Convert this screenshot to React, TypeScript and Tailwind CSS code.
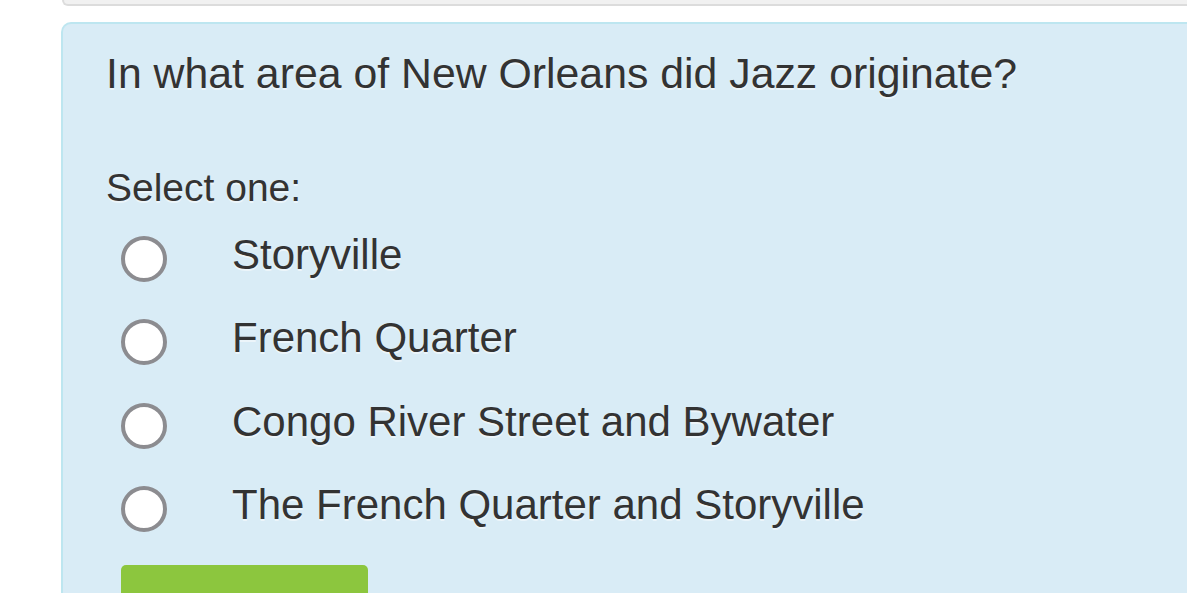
const options = [
  'Storyville',
  'French Quarter',
  'Congo River Street and Bywater',
  'The French Quarter and Storyville',
]

function Radio() {
  return (
    <span className="mt-[6px] block h-[46px] w-[46px] shrink-0 rounded-full border-[4px] border-[#8c8c90] bg-white" />
  )
}

export default function App() {
  return (
    <div
      className="h-[593px] w-[1187px] overflow-hidden bg-white text-[#333]"
      style={{ fontFamily: '"Liberation Sans", Arial, Helvetica, sans-serif' }}
    >
      {/* previous panel, only its bottom edge shows */}
      <div className="ml-[62px] h-[6px] rounded-bl-[8px] border-b-2 border-l-2 border-[#dcdcdc] bg-[#f1f1f1]" />

      <div className="ml-[61px] mt-[16px] h-[600px] rounded-tl-[10px] border-l-2 border-t-2 border-[#bde6f0] bg-[#d9ecf6] pl-[43px] pt-[24px] [text-shadow:0_2px_0_rgba(255,255,255,0.5)]">
        <p className="text-[42.8px] leading-[50px]">In what area of New Orleans did Jazz originate?</p>

        <p className="mt-[66px] text-[39px] leading-[48px]">Select one:</p>

        <div className="mt-[18px] flex flex-col">
          {options.map((o) => (
            <label key={o} className="flex h-[83.3px] items-start pl-[15px]">
              <Radio />
              <span className="ml-[65px] text-[42px] leading-[49px]">{o}</span>
            </label>
          ))}
        </div>

        <div className="ml-[15px] mt-[2px] h-[40px] w-[247px] rounded-t-[5px] bg-[#8cc63e]" />
      </div>
    </div>
  )
}
